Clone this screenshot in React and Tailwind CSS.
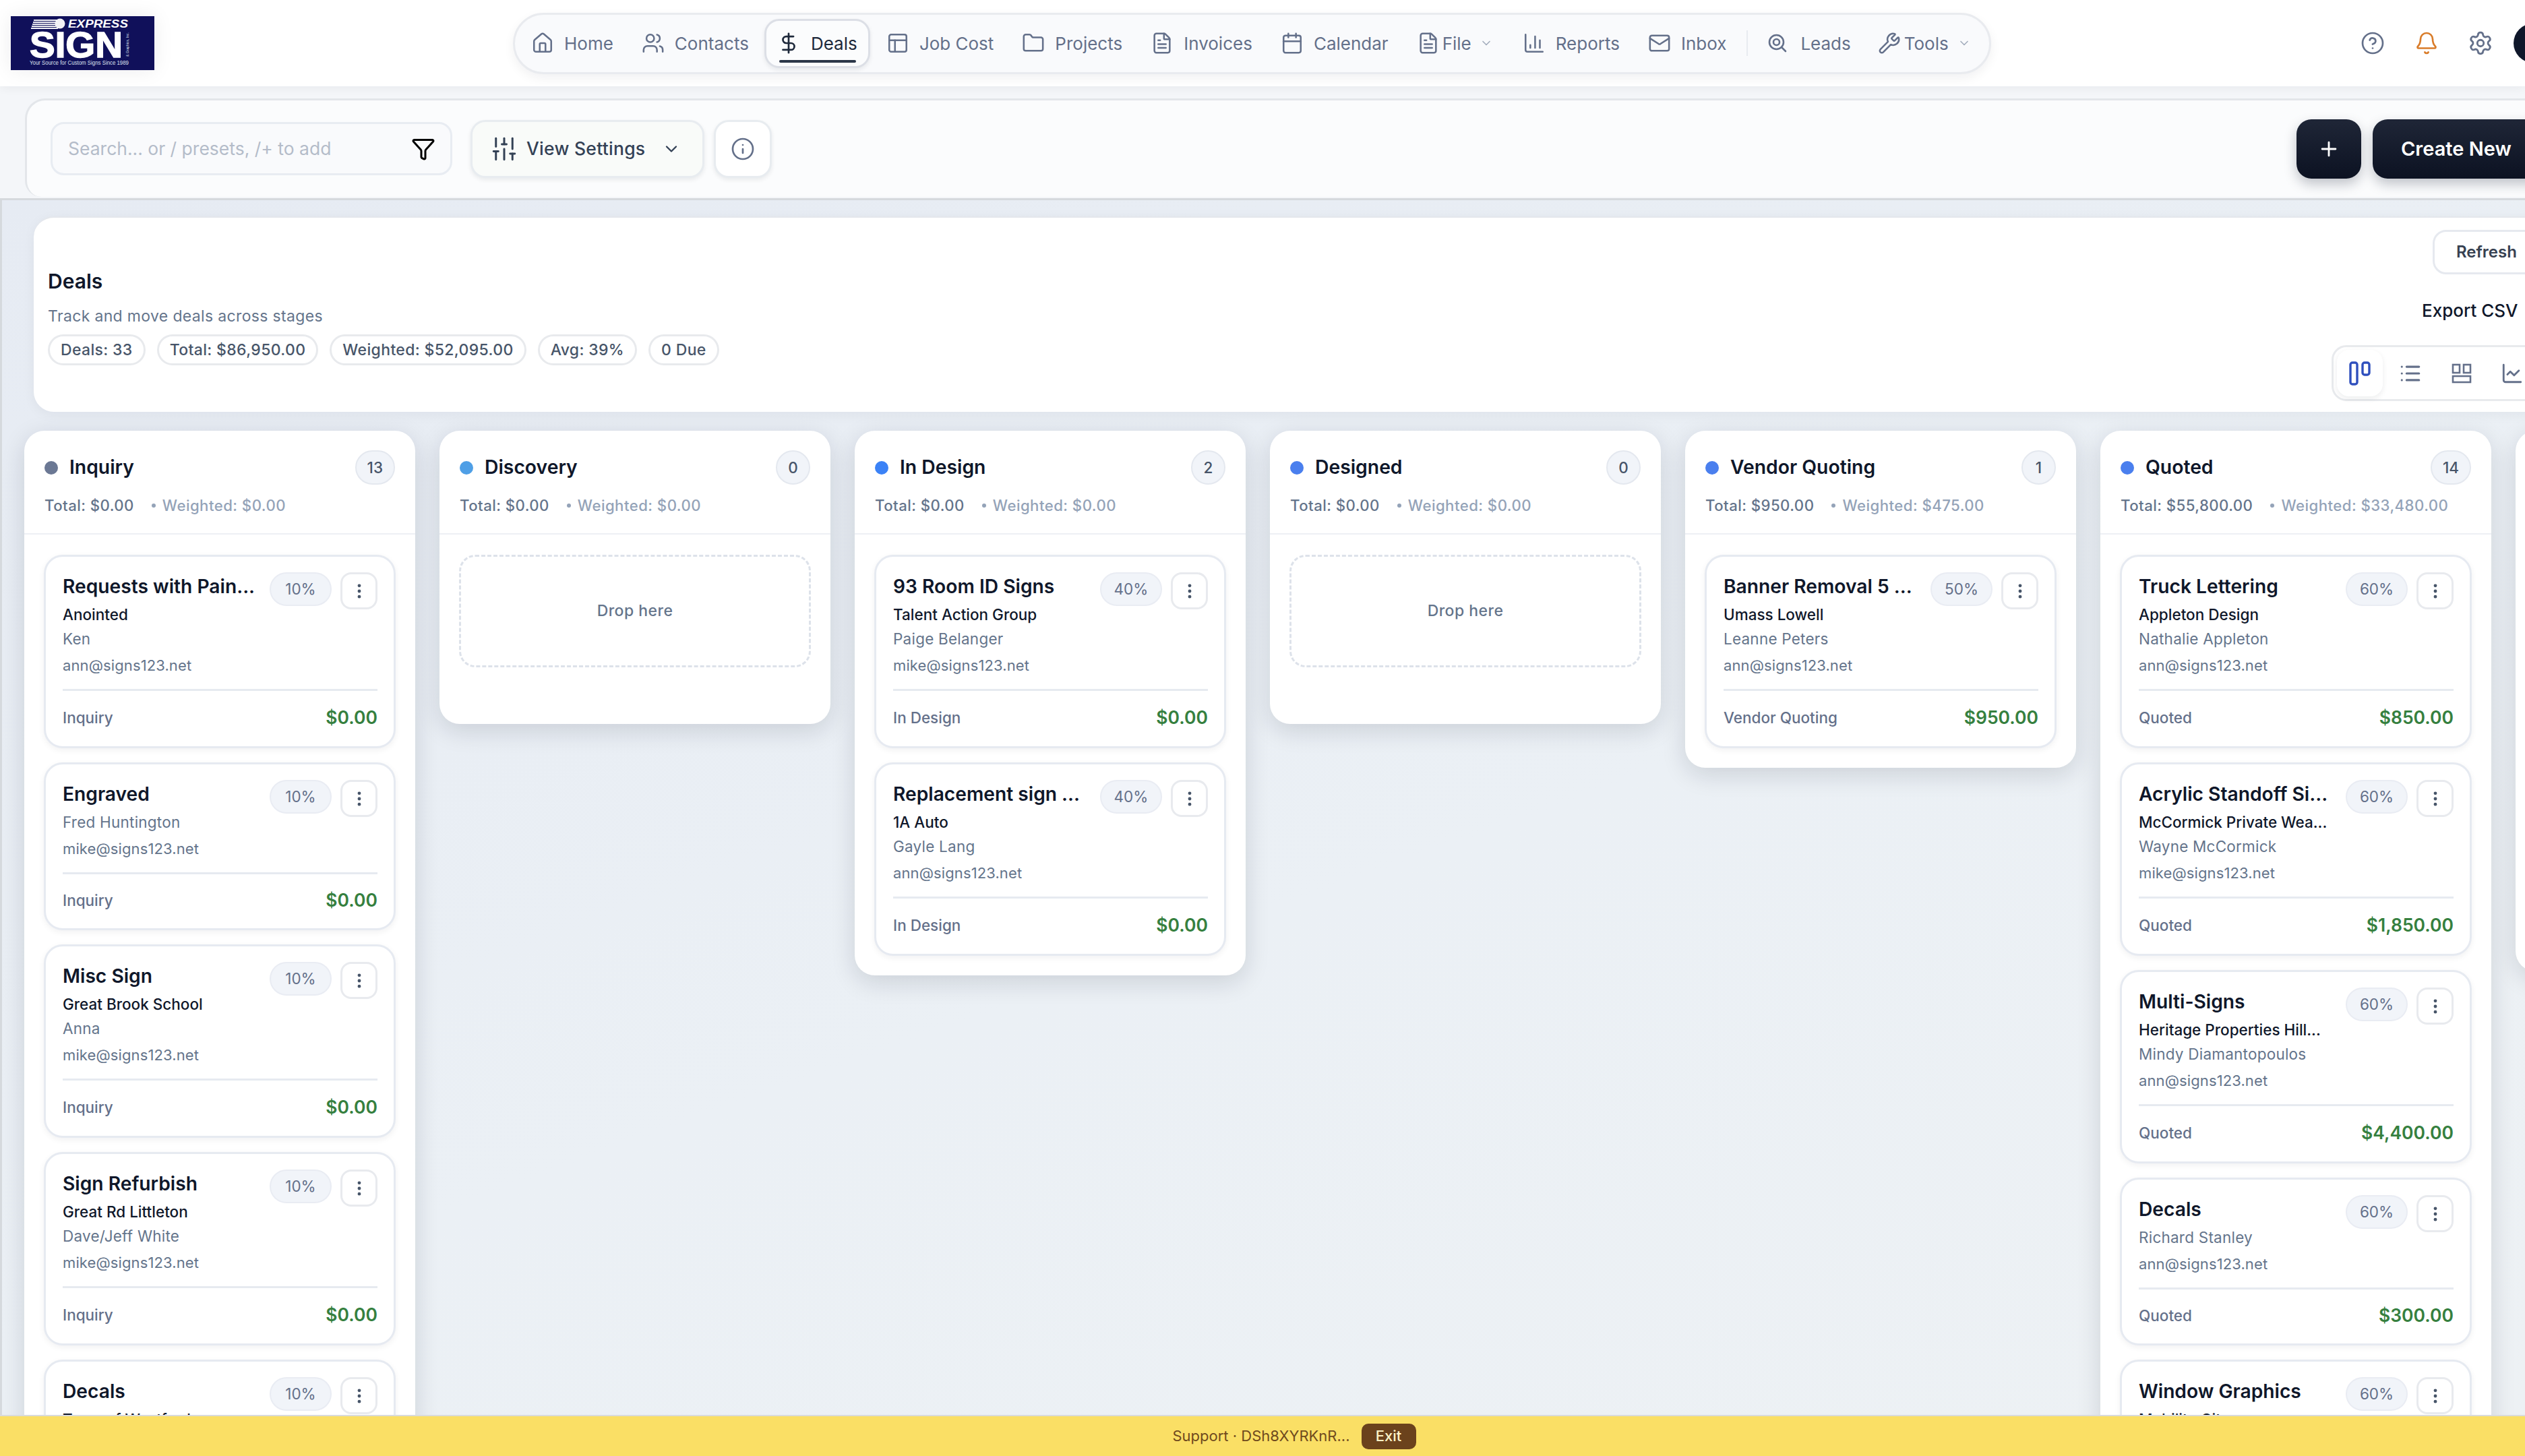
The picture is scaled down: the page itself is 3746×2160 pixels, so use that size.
import {
  House,
  Users,
  DollarSign,
  PanelsTopLeft,
  Folder,
  FileText,
  Calendar,
  ChartColumn,
  Mail,
  Wrench,
  ChevronDown,
  CircleHelp,
  Bell,
  Settings,
  Plus,
  Info,
  Funnel,
  SlidersVertical,
  EllipsisVertical,
  List,
  ChartLine,
} from "lucide-react";

const navItems = [
  { label: "Home", icon: House },
  { label: "Contacts", icon: Users },
  { label: "Deals", icon: DollarSign, active: true },
  { label: "Job Cost", icon: PanelsTopLeft },
  { label: "Projects", icon: Folder },
  { label: "Invoices", icon: FileText },
  { label: "Calendar", icon: Calendar },
  { label: "File", icon: FileText, menu: true },
  { label: "Reports", icon: ChartColumn },
  { label: "Inbox", icon: Mail },
];

const columns = [
  {
    name: "Inquiry",
    dot: "bg-[#6b7894]",
    count: 13,
    total: "$0.00",
    weighted: "$0.00",
    pct: "10%",
    deals: [
      { title: "Requests with Pain...", org: "Anointed", person: "Ken", email: "ann@signs123.net", amount: "$0.00" },
      { title: "Engraved", person: "Fred Huntington", email: "mike@signs123.net", amount: "$0.00" },
      { title: "Misc Sign", org: "Great Brook School", person: "Anna", email: "mike@signs123.net", amount: "$0.00" },
      { title: "Sign Refurbish", org: "Great Rd Littleton", person: "Dave/Jeff White", email: "mike@signs123.net", amount: "$0.00" },
      { title: "Decals", org: "Town of Westford", person: "Ken", email: "ann@signs123.net", amount: "$0.00" },
    ],
  },
  { name: "Discovery", dot: "bg-[#4f9fe6]", count: 0, total: "$0.00", weighted: "$0.00", pct: "20%", deals: [] },
  {
    name: "In Design",
    dot: "bg-[#3b82f6]",
    count: 2,
    total: "$0.00",
    weighted: "$0.00",
    pct: "40%",
    deals: [
      { title: "93 Room ID Signs", org: "Talent Action Group", person: "Paige Belanger", email: "mike@signs123.net", amount: "$0.00" },
      { title: "Replacement sign ...", org: "1A Auto", person: "Gayle Lang", email: "ann@signs123.net", amount: "$0.00" },
    ],
  },
  { name: "Designed", dot: "bg-[#4a7fee]", count: 0, total: "$0.00", weighted: "$0.00", pct: "30%", deals: [] },
  {
    name: "Vendor Quoting",
    dot: "bg-[#4a7fee]",
    count: 1,
    total: "$950.00",
    weighted: "$475.00",
    pct: "50%",
    deals: [
      { title: "Banner Removal 5 ...", org: "Umass Lowell", person: "Leanne Peters", email: "ann@signs123.net", amount: "$950.00" },
    ],
  },
  {
    name: "Quoted",
    dot: "bg-[#4a7fee]",
    count: 14,
    total: "$55,800.00",
    weighted: "$33,480.00",
    pct: "60%",
    deals: [
      { title: "Truck Lettering", org: "Appleton Design", person: "Nathalie Appleton", email: "ann@signs123.net", amount: "$850.00" },
      { title: "Acrylic Standoff Si...", org: "McCormick Private Wea...", person: "Wayne McCormick", email: "mike@signs123.net", amount: "$1,850.00" },
      { title: "Multi-Signs", org: "Heritage Properties Hill...", person: "Mindy Diamantopoulos", email: "ann@signs123.net", amount: "$4,400.00" },
      { title: "Decals", person: "Richard Stanley", email: "ann@signs123.net", amount: "$300.00" },
      { title: "Window Graphics", org: "Mobility City", person: "Ken", email: "ann@signs123.net", amount: "$0.00" },
    ],
  },
];

function Logo() {
  return (
    <svg width="213" height="80" viewBox="0 0 213 80" className="shrink-0 shadow-[0_0_30px_rgba(15,23,42,0.08)]">
      <rect width="213" height="80" fill="#10105a" />
      <g fill="#f1f1f6">
        <rect x="34" y="5" width="36" height="2" />
        <rect x="33" y="8" width="37" height="2" />
        <rect x="32" y="11" width="38" height="2" />
        <rect x="31" y="14" width="39" height="2" />
        <rect x="30" y="17" width="40" height="2" />
        <circle cx="73" cy="11" r="7.5" />
      </g>
      <text x="85" y="17" fill="#fff" fontFamily="Liberation Sans" fontWeight="700" fontStyle="italic" fontSize="16" textLength="89" lengthAdjust="spacingAndGlyphs">EXPRESS</text>
      <text x="28" y="61" fill="#fff" fontFamily="Liberation Sans" fontWeight="700" fontSize="54" stroke="#fff" strokeWidth="1.5" textLength="138" lengthAdjust="spacingAndGlyphs">SIGN</text>
      <text x="28" y="71.5" fill="#dfe0ee" fontFamily="Liberation Sans" fontSize="8.2" textLength="147" lengthAdjust="spacingAndGlyphs">Your Source for Custom Signs Since 1989</text>
      <text transform="translate(175 60) rotate(-90)" fill="#dfe0ee" fontFamily="Liberation Sans" fontSize="5.2" textLength="36" lengthAdjust="spacingAndGlyphs">&amp; Graphics, Inc.</text>
    </svg>
  );
}

function LeadsIcon() {
  return (
    <svg width="28" height="28" viewBox="0 0 28 28" fill="none" stroke="currentColor" strokeWidth="2.6" strokeLinecap="round" className="shrink-0">
      <circle cx="12.5" cy="12.5" r="10.5" />
      <circle cx="12.5" cy="12.5" r="4.5" />
      <path d="M20.5 20.5 26 26" />
    </svg>
  );
}

function NavItem({ item }) {
  const Icon = item.icon;
  if (item.active) {
    return (
      <div className="relative mr-[2px] flex h-[73px] w-[157px] shrink-0 items-center gap-[16px] rounded-[22px] border-[3px] border-[#dcdfe6] bg-[#fbfcfd] pl-[16px] text-[#1e293b] shadow-[0_3px_6px_rgba(15,23,42,0.08)]">
        <Icon size={34} strokeWidth={1.9} className="shrink-0" />
        <span>{item.label}</span>
        <div className="absolute left-[19px] bottom-[5px] h-[4px] w-[114px] rounded-full bg-[#2b3648]" />
      </div>
    );
  }
  return (
    <div className={`flex shrink-0 items-center py-2 pl-[19px] ${item.menu ? "gap-[4px] pr-[22px]" : "gap-[15px] pr-[20px]"}`}>
      <Icon size={34} strokeWidth={1.8} className="shrink-0" />
      <span>{item.label}</span>
      {item.menu && <ChevronDown size={20} strokeWidth={2} className="ml-[8px] text-[#a3adbd]" />}
    </div>
  );
}

function Header() {
  return (
    <header className="relative z-20 flex h-[128px] shrink-0 items-center bg-white pl-[16px] shadow-[0_2px_14px_rgba(15,23,42,0.06)]">
      <Logo />
      <nav className="ml-[532px] flex h-[91px] w-[2193px] shrink-0 items-center gap-[3px] rounded-[46px] border-[3px] border-[#e9ebef] bg-[#f9fafc] pl-[5px] text-[26px] text-[#64708a] shadow-[0_6px_16px_rgba(15,23,42,0.06)]">
        {navItems.map((item) => (
          <NavItem key={item.label} item={item} />
        ))}
        <div className="ml-[7px] mr-[15px] h-[38px] w-[2px] shrink-0 bg-[#e8ebf0]" />
        <div className="ml-[-7px] flex shrink-0 items-center gap-[20px] py-2 pl-[19px] pr-[20px]">
          <LeadsIcon />
          <span>Leads</span>
        </div>
        <div className="flex shrink-0 items-center gap-[5px] py-2 pl-[17px]">
          <Wrench size={34} strokeWidth={1.8} className="shrink-0" />
          <span>Tools</span>
          <ChevronDown size={20} strokeWidth={2} className="ml-[8px] text-[#a3adbd]" />
        </div>
      </nav>
      <div className="ml-[548px] flex shrink-0 items-center text-[#64708a]">
        <CircleHelp size={36} strokeWidth={1.8} />
        <Bell size={36} strokeWidth={1.8} className="ml-[44px] text-[#d97c2a]" />
        <Settings size={38} strokeWidth={1.8} className="ml-[43px]" />
        <div className="ml-[30px] flex h-[58px] w-[58px] shrink-0 items-center justify-center rounded-full bg-[#0f172a] text-[26px] font-semibold text-white">J</div>
      </div>
    </header>
  );
}

function Toolbar() {
  return (
    <div className="h-[166px] shrink-0 bg-[#f4f6f9] pl-[37px] pt-[18px]">
      <div className="flex h-[146px] w-[3800px] items-center rounded-tl-[30px] rounded-bl-[24px] border-t-[3px] border-l-[3px] border-[#e3e6ea] bg-[#fbfcfd] pl-[35px]">
        <div className="flex h-[79px] w-[596px] shrink-0 items-center justify-between rounded-[20px] border-[3px] border-[#e8ecf2] bg-[#f9fafc] pl-[23px] pr-[22px] text-[26.5px] text-[#b4bcc9]">
          <span>Search... or / presets, /+ to add</span>
          <Funnel size={36} strokeWidth={2} className="text-black" />
        </div>
        <div className="ml-[27px] flex h-[86px] w-[347px] shrink-0 items-center rounded-[22px] border-[3px] border-[#e8ecf0] bg-[#f9fbf9] pl-[26px] text-[26.5px] font-medium tracking-[0.01em] text-[#334155] shadow-[0_3px_6px_rgba(15,23,42,0.08)]">
          <SlidersVertical size={42} strokeWidth={1.7} className="shrink-0" />
          <span className="ml-[12px]">View Settings</span>
          <ChevronDown size={28} strokeWidth={2} className="ml-[25px]" />
        </div>
        <div className="ml-[14px] flex h-[86px] w-[86px] shrink-0 items-center justify-center rounded-[22px] border-[3px] border-[#e8ecf0] bg-white text-[#64708a] shadow-[0_3px_6px_rgba(15,23,42,0.08)]">
          <Info size={36} strokeWidth={1.8} />
        </div>
        <div className="ml-[2262px] flex h-[88px] w-[96px] shrink-0 items-center justify-center rounded-[22px] bg-[linear-gradient(#1f2637,#0c1222)] text-white shadow-[0_8px_18px_rgba(15,23,42,0.25)]">
          <Plus size={34} strokeWidth={2} />
        </div>
        <div className="ml-[17px] flex h-[88px] w-[270px] shrink-0 items-center rounded-[22px] bg-[linear-gradient(#1f2637,#0c1222)] pl-[42px] text-[29px] font-semibold text-white shadow-[0_8px_18px_rgba(15,23,42,0.25)]">
          Create New
        </div>
      </div>
    </div>
  );
}

function ColumnsIcon() {
  return (
    <svg width="32" height="36" viewBox="0 0 32 36" fill="none" stroke="#2f4fbd" strokeWidth="3.4" className="shrink-0">
      <rect x="2" y="2" width="10" height="32" rx="3" />
      <rect x="20" y="2" width="10" height="18" rx="3" />
    </svg>
  );
}

function BoardIcon() {
  return (
    <svg width="30" height="30" viewBox="0 0 30 30" fill="none" stroke="#64708a" strokeWidth="2.6" className="shrink-0">
      <rect x="2" y="2" width="10" height="12" />
      <rect x="18" y="2" width="10" height="12" />
      <rect x="2" y="19" width="26" height="9" />
    </svg>
  );
}

function DealsPanel() {
  const stats = ["Deals: 33", "Total: $86,950.00", "Weighted: $52,095.00", "Avg: 39%", "0 Due"];
  return (
    <section className="relative ml-[47px] mt-[24px] flex h-[290px] w-[3750px] shrink-0 items-start rounded-[30px] border-t-2 border-[#e4e7ec] bg-white pl-[21px] shadow-[0_4px_18px_rgba(15,23,42,0.05)]">
      <div className="pt-[72px]">
        <h1 className="text-[30px] font-semibold leading-[44px] text-[#0f172a]">Deals</h1>
        <p className="mt-[14px] text-[23px] leading-[32px] tracking-[0.015em] text-[#64748b]">Track and move deals across stages</p>
        <div className="mt-[11px] flex gap-[17px]">
          {stats.map((s) => (
            <span key={s} className="flex h-[46px] items-center rounded-full border-[3px] border-[#e8eaed] px-[16px] text-[23px] font-medium tracking-[0.015em] text-[#475569]">{s}</span>
          ))}
        </div>
      </div>
      <div className="absolute left-[3409px] top-[18px] w-[400px]">
        <div className="ml-[150px] flex h-[66px] w-[200px] items-center rounded-[20px] border-[3px] border-[#e6e9ef] bg-white pl-[32px] text-[24px] font-semibold text-[#374151]">Refresh</div>
        <div className="ml-[134px] mt-[38px] text-[26px] font-medium leading-[32px] text-[#0f172a]">Export CSV</div>
        <div className="mt-[35px] flex h-[83px] w-[400px] items-center rounded-[22px] border-[3px] border-[#e8eaed] pl-[5px]">
          <div className="flex h-[69px] w-[68px] shrink-0 items-center justify-center rounded-[18px] bg-white shadow-[0_3px_8px_rgba(15,23,42,0.08)]">
            <ColumnsIcon />
          </div>
          <List size={34} strokeWidth={2.2} className="ml-[24px] shrink-0 text-[#64708a]" />
          <div className="ml-[44px] shrink-0"><BoardIcon /></div>
          <ChartLine size={34} strokeWidth={2} className="ml-[43px] shrink-0 text-[#64708a]" />
        </div>
      </div>
    </section>
  );
}

function DealCard({ deal, stage, pct }) {
  return (
    <article className="shrink-0 rounded-[28px] border-[3px] border-[#e6eaf1] bg-white pl-[25px] pr-[24px] pt-[23px] shadow-[0_3px_10px_rgba(15,23,42,0.06)]">
      <div className="flex items-start">
        <div className="min-w-0 flex-1 pr-[12px]">
          <h3 className="truncate text-[28.2px] font-semibold leading-[42px] text-[#0f172a]">{deal.title}</h3>
          {deal.org && <p className="mt-[3px] truncate text-[22.5px] font-medium leading-[36px] text-[#0f172a]">{deal.org}</p>}
          <p className={`${deal.org ? "" : "mt-[3px]"} truncate text-[22.5px] leading-[36px] tracking-[0.01em] text-[#64748b]`}>{deal.person}</p>
          <p className="mt-[3px] truncate text-[22px] leading-[36px] tracking-[0.005em] text-[#64748b]">{deal.email}</p>
        </div>
        <span className="flex h-[50px] w-[92px] shrink-0 items-center justify-center rounded-full border-2 border-[#e9ecf3] bg-[#f1f4f9] text-[22.5px] text-[#64708a]">{pct}</span>
        <span className="ml-[13px] flex h-[55px] w-[55px] shrink-0 items-center justify-center rounded-[16px] border-[3px] border-[#e8eaee] bg-white text-[#475569]">
          <EllipsisVertical size={28} strokeWidth={2.2} />
        </span>
      </div>
      <div className={`mt-[17px] flex items-center justify-between border-t-[3px] border-[#e6eaf0] pb-[2px] ${deal.org ? "h-[85px]" : "h-[83px]"}`}>
        <span className="text-[22.5px] font-medium text-[#64708a]">{stage}</span>
        <span className="text-[26.5px] font-semibold text-[#36803f]">{deal.amount}</span>
      </div>
    </article>
  );
}

function Column({ col }) {
  return (
    <section className="w-[580px] shrink-0 rounded-[30px] bg-white shadow-[0_10px_36px_rgba(15,23,42,0.14)]">
      <div className="h-[154px] border-b-2 border-[#edf0f5] px-[30px] pt-[29px]">
        <div className="flex h-[51px] items-center">
          <span className={`h-[20px] w-[20px] shrink-0 rounded-full ${col.dot}`} />
          <h2 className="ml-[17px] flex-1 text-[28.3px] font-semibold text-[#0f172a]">{col.name}</h2>
          <span className="flex h-[51px] min-w-[51px] items-center justify-center rounded-full border-2 border-[#e4e8ef] bg-[#f1f4f9] px-[16px] text-[22.5px] font-medium text-[#475569]">{col.count}</span>
        </div>
        <div className="mt-[15px] flex items-center text-[22.2px] leading-[32px] tracking-[0.02em] font-medium">
          <span className="text-[#64748b]">Total: {col.total}</span>
          <span className="ml-[26px] h-[6px] w-[6px] shrink-0 rounded-full bg-[#94a3b8]" />
          <span className="ml-[10px] text-[#94a3b8]">Weighted: {col.weighted}</span>
        </div>
      </div>
      <div className={`flex flex-col gap-[21px] px-[29px] pt-[30px] ${col.deals.length ? "pb-[29px]" : "pb-[84px]"}`}>
        {col.deals.map((d) => (
          <DealCard key={d.title} deal={d} stage={col.name} pct={col.pct} />
        ))}
        {!col.deals.length && (
          <div className="flex h-[167px] items-center justify-center rounded-[24px] border-[3px] border-dashed border-[#dde2ea] text-[23px] font-medium tracking-[0.02em] text-[#64748b]">Drop here</div>
        )}
      </div>
    </section>
  );
}

export default function App() {
  return (
    <div className="flex h-[2160px] w-[3746px] flex-col overflow-hidden bg-white [font-family:Inter,sans-serif]">
      <Header />
      <Toolbar />
      <main className="flex min-h-0 flex-1 flex-col overflow-hidden border-t-[3px] border-l-[3px] border-[#d5d9dd] bg-[linear-gradient(160deg,#e6ebf3,#ebf0f5_55%,#edf1f4)]">
        <DealsPanel />
        <div className="ml-[33px] mt-[28px] flex items-start gap-[36px]">
          {columns.map((col) => (
            <Column key={col.name} col={col} />
          ))}
          <section className="h-[802px] w-[580px] shrink-0 rounded-[30px] bg-white shadow-[0_10px_36px_rgba(15,23,42,0.14)]" />
        </div>
      </main>
      <footer className="flex h-[61px] shrink-0 items-center justify-center gap-[17px] border-t-2 border-[#d9dbdb] bg-[#fadf65] pl-[94px] text-[22px] text-[#6f4a1e]">
        <span>Support · DSh8XYRKnR...</span>
        <span className="flex h-[38px] w-[81px] items-center justify-center rounded-[10px] bg-[#6b421c] font-medium text-[#fef3c7]">Exit</span>
      </footer>
    </div>
  );
}
